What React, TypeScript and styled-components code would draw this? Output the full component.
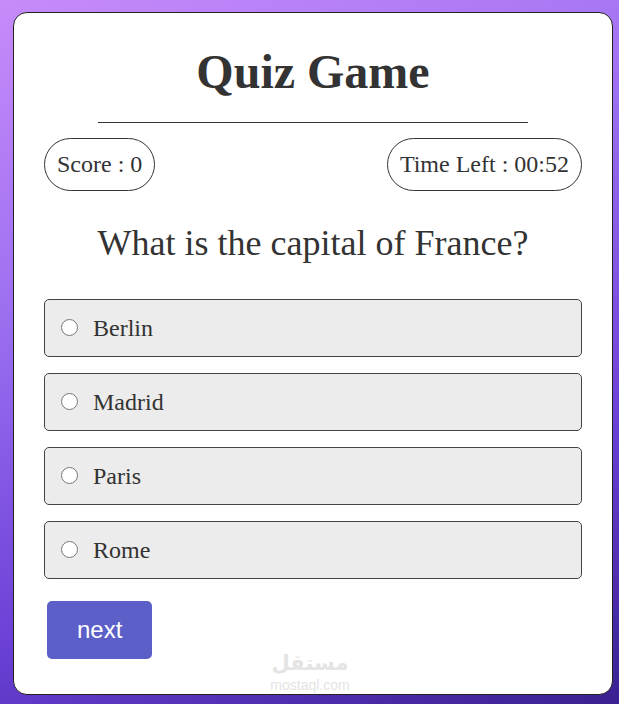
import styled, { createGlobalStyle } from "styled-components";

const GlobalStyle = createGlobalStyle`
  * {
    box-sizing: border-box;
  }

  html, body {
    margin: 0;
    min-height: 100%;
  }

  body {
    min-height: 704px;
    padding: 12px 6px 9px 13px;
    background: linear-gradient(160deg, #c78bfa 0%, #9b6ef0 35%, #6a40d6 70%, #3a2090 100%);
    font-family: "Liberation Serif", "Times New Roman", serif;
    color: #333;
  }
`;

const Card = styled.div`
  position: relative;
  width: 600px;
  height: 683px;
  background-color: #fff;
  border: 1px solid #222;
  border-radius: 14px;
  padding: 31px 30px 30px;
  display: flex;
  flex-direction: column;
`;

const Title = styled.h1`
  margin: 0;
  font-size: 48px;
  font-weight: 700;
  text-align: center;
  color: #333;
`;

const Divider = styled.div`
  width: 80%;
  margin: 23px auto 0;
  border-top: 1px solid #333;
`;

const StatsRow = styled.div`
  display: flex;
  justify-content: space-between;
  margin-top: 15px;
`;

const Pill = styled.div`
  padding: 12px;
  border: 1px solid #333;
  border-radius: 27px;
  font-size: 24px;
  line-height: 27px;
  color: #333;
`;

const Question = styled.h2`
  margin: 32px 0 0;
  font-size: 36px;
  font-weight: 400;
  line-height: 40px;
  text-align: center;
  color: #333;
`;

const OptionList = styled.div`
  display: flex;
  flex-direction: column;
  gap: 16px;
  margin-top: 36px;
`;

const Option = styled.label`
  display: flex;
  align-items: center;
  gap: 15px;
  padding: 14px 16px;
  background-color: #ececec;
  border: 1px solid #444;
  border-radius: 5px;
  font-size: 24px;
  line-height: 28px;
  color: #333;
  cursor: pointer;
`;

const Radio = styled.span`
  width: 17px;
  height: 17px;
  margin-top: -2px;
  border: 1.5px solid #767676;
  border-radius: 50%;
  background-color: #fff;
  flex-shrink: 0;
`;

const NextButton = styled.button`
  align-self: flex-start;
  margin: 22px 0 0 3px;
  padding: 15px 30px;
  border: none;
  border-radius: 5px;
  background-color: #5b5fc7;
  color: #fff;
  font-family: "Liberation Sans", Arial, sans-serif;
  font-size: 24px;
  line-height: 28px;
  cursor: pointer;
`;

const Watermark = styled.div`
  position: absolute;
  left: 241px;
  top: 636px;
  width: 110px;
  display: flex;
  flex-direction: column;
  align-items: center;
  color: #e4e4e4;
  pointer-events: none;

  span:first-child {
    font-family: "DejaVu Sans", sans-serif;
    font-size: 21px;
    font-weight: 700;
    line-height: 28px;
  }

  span:last-child {
    font-family: "Liberation Sans", Arial, sans-serif;
    font-size: 14px;
    line-height: 16px;
  }
`;

const options = ["Berlin", "Madrid", "Paris", "Rome"];

function App() {
  return (
    <>
      <GlobalStyle />
      <Card>
        <Title>Quiz Game</Title>
        <Divider />

        <StatsRow>
          <Pill>Score : 0</Pill>
          <Pill>Time Left : 00:52</Pill>
        </StatsRow>

        <Question>What is the capital of France?</Question>

        <OptionList>
          {options.map((option) => (
            <Option key={option}>
              <Radio />
              {option}
            </Option>
          ))}
        </OptionList>

        <NextButton>next</NextButton>

        <Watermark>
          <span>مستقل</span>
          <span>mostaql.com</span>
        </Watermark>
      </Card>
    </>
  );
}

export default App;
